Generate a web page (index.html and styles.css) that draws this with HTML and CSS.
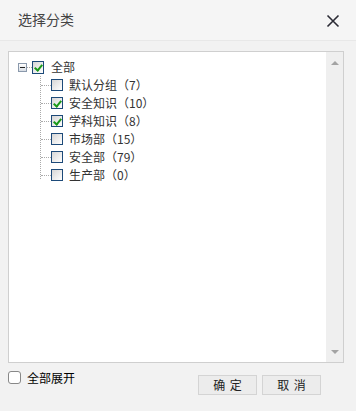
FILE: index.html
```html
<!DOCTYPE html>
<html>
<head>
<meta charset="utf-8">
<link rel="stylesheet" href="styles.css">
</head>
<body>
<div class="dialog">
  <div class="header">
    <span class="title">选择分类</span>
    <svg class="close" width="14" height="14" viewBox="0 0 14 14"><path d="M1.5 1.5L12.5 12.5M12.5 1.5L1.5 12.5" stroke="#2b2b35" stroke-width="1.6"/></svg>
  </div>
  <div class="body">
    <div class="treebox">
      <div class="tree">
        <div class="row root">
          <span class="toggle"><span class="minus"></span></span>
          <span class="dot-h short"></span>
          <span class="cb checked"></span>
          <span class="label">全部</span>
        </div>
        <div class="children">
          <div class="row child"><span class="dot-h"></span><span class="cb"></span><span class="label">默认分组（7）</span></div>
          <div class="row child"><span class="dot-h"></span><span class="cb checked"></span><span class="label">安全知识（10）</span></div>
          <div class="row child"><span class="dot-h"></span><span class="cb checked"></span><span class="label">学科知识（8）</span></div>
          <div class="row child"><span class="dot-h"></span><span class="cb"></span><span class="label">市场部（15）</span></div>
          <div class="row child"><span class="dot-h"></span><span class="cb"></span><span class="label">安全部（79）</span></div>
          <div class="row child last"><span class="dot-h"></span><span class="cb"></span><span class="label">生产部（0）</span></div>
        </div>
      </div>
      <div class="scrollbar">
        <span class="arrow up"></span>
        <span class="arrow down"></span>
      </div>
    </div>
    <div class="footer">
      <label class="expand"><span class="plaincb"></span><span>全部展开</span></label>
      <div class="buttons">
        <button class="btn">确 定</button>
        <button class="btn">取 消</button>
      </div>
    </div>
  </div>
</div>
</body>
</html>
```
FILE: styles.css
```css
* { box-sizing: border-box; }
html, body { margin: 0; padding: 0; }
body {
  width: 356px;
  height: 411px;
  background: #f2f2f2;
  font-family: "Noto Sans CJK SC", "Noto Sans", sans-serif;
  overflow: hidden;
}
.dialog { width: 356px; height: 411px; display: flex; flex-direction: column; }
.header {
  height: 41px;
  background: #f5f5f5;
  border-bottom: 1px solid #e8e8e8;
  display: flex;
  align-items: center;
  justify-content: space-between;
  padding: 0 16px 0 18px;
  flex: none;
}
.title { font-size: 14px; color: #444; line-height: 20px; margin-top: -2px; }
.close { display: block; margin-top: 1px; }
.body { padding: 10px 12px 0 8px; flex: 1; display: flex; flex-direction: column; }
.treebox {
  height: 312px;
  background: #fff;
  border: 1px solid #cfcfcf;
  display: flex;
}
.tree { flex: 1; padding: 6px 0 0 9px; font-size: 12px; color: #333; }
.row { display: flex; align-items: center; height: 18px; }
.toggle {
  width: 9px; height: 9px;
  border: 1px solid #8a99ac;
  background: linear-gradient(#ffffff, #d8dde4);
  display: flex; align-items: center; justify-content: center;
  flex: none;
}
.minus { width: 5px; height: 1px; background: #222; }
.dot-h {
  width: 10px; height: 0;
  border-top: 1px dotted #aaa;
  flex: none;
}
.dot-h.short { width: 5px; }
.cb {
  width: 12px; height: 12px;
  border: 1px solid #1d4a79;
  background: linear-gradient(135deg, #d6d6d6, #ffffff);
  position: relative;
  margin-right: 6px;
  flex: none;
}
.root .cb { width: 12px; height: 13px; margin-right: 7px; }
.cb.checked::after {
  content: "";
  position: absolute;
  left: 3px; top: 1px;
  width: 3px; height: 6px;
  border: solid #1a9a1a;
  border-width: 0 2px 2px 0;
  transform: rotate(40deg);
}
.children {
  margin-left: 22px;
  border-left: 1px dotted #aaa;
  height: 103px;
}
.label { line-height: 18px; white-space: nowrap; }
.scrollbar {
  width: 17px;
  background: #efefef;
  display: flex;
  flex-direction: column;
  justify-content: space-between;
  align-items: center;
  padding: 9px 0 8px;
}
.arrow { width: 0; height: 0; border-left: 4px solid transparent; border-right: 4px solid transparent; }
.arrow.up { border-bottom: 4px solid #a3a3a3; }
.arrow.down { border-top: 4px solid #a3a3a3; }
.footer { display: flex; justify-content: space-between; padding-top: 6px; }
.expand { display: flex; align-items: flex-start; font-size: 12px; color: #000; gap: 6px; line-height: 18px; }
.plaincb {
  width: 13px; height: 13px;
  border: 1px solid #888;
  border-radius: 3px;
  background: #fff;
  margin-top: 2px;
}
.buttons { display: flex; gap: 5px; padding-top: 6px; margin-right: 23px; }
.btn {
  width: 59px; height: 20px;
  border: 1px solid #d4d4d4;
  background: #ececec;
  font-family: "Noto Sans CJK SC", sans-serif;
  font-size: 12px;
  color: #222;
  padding: 0;
  line-height: 18px;
  letter-spacing: 1px;
  text-indent: 1px;
  white-space: pre;
}
```
